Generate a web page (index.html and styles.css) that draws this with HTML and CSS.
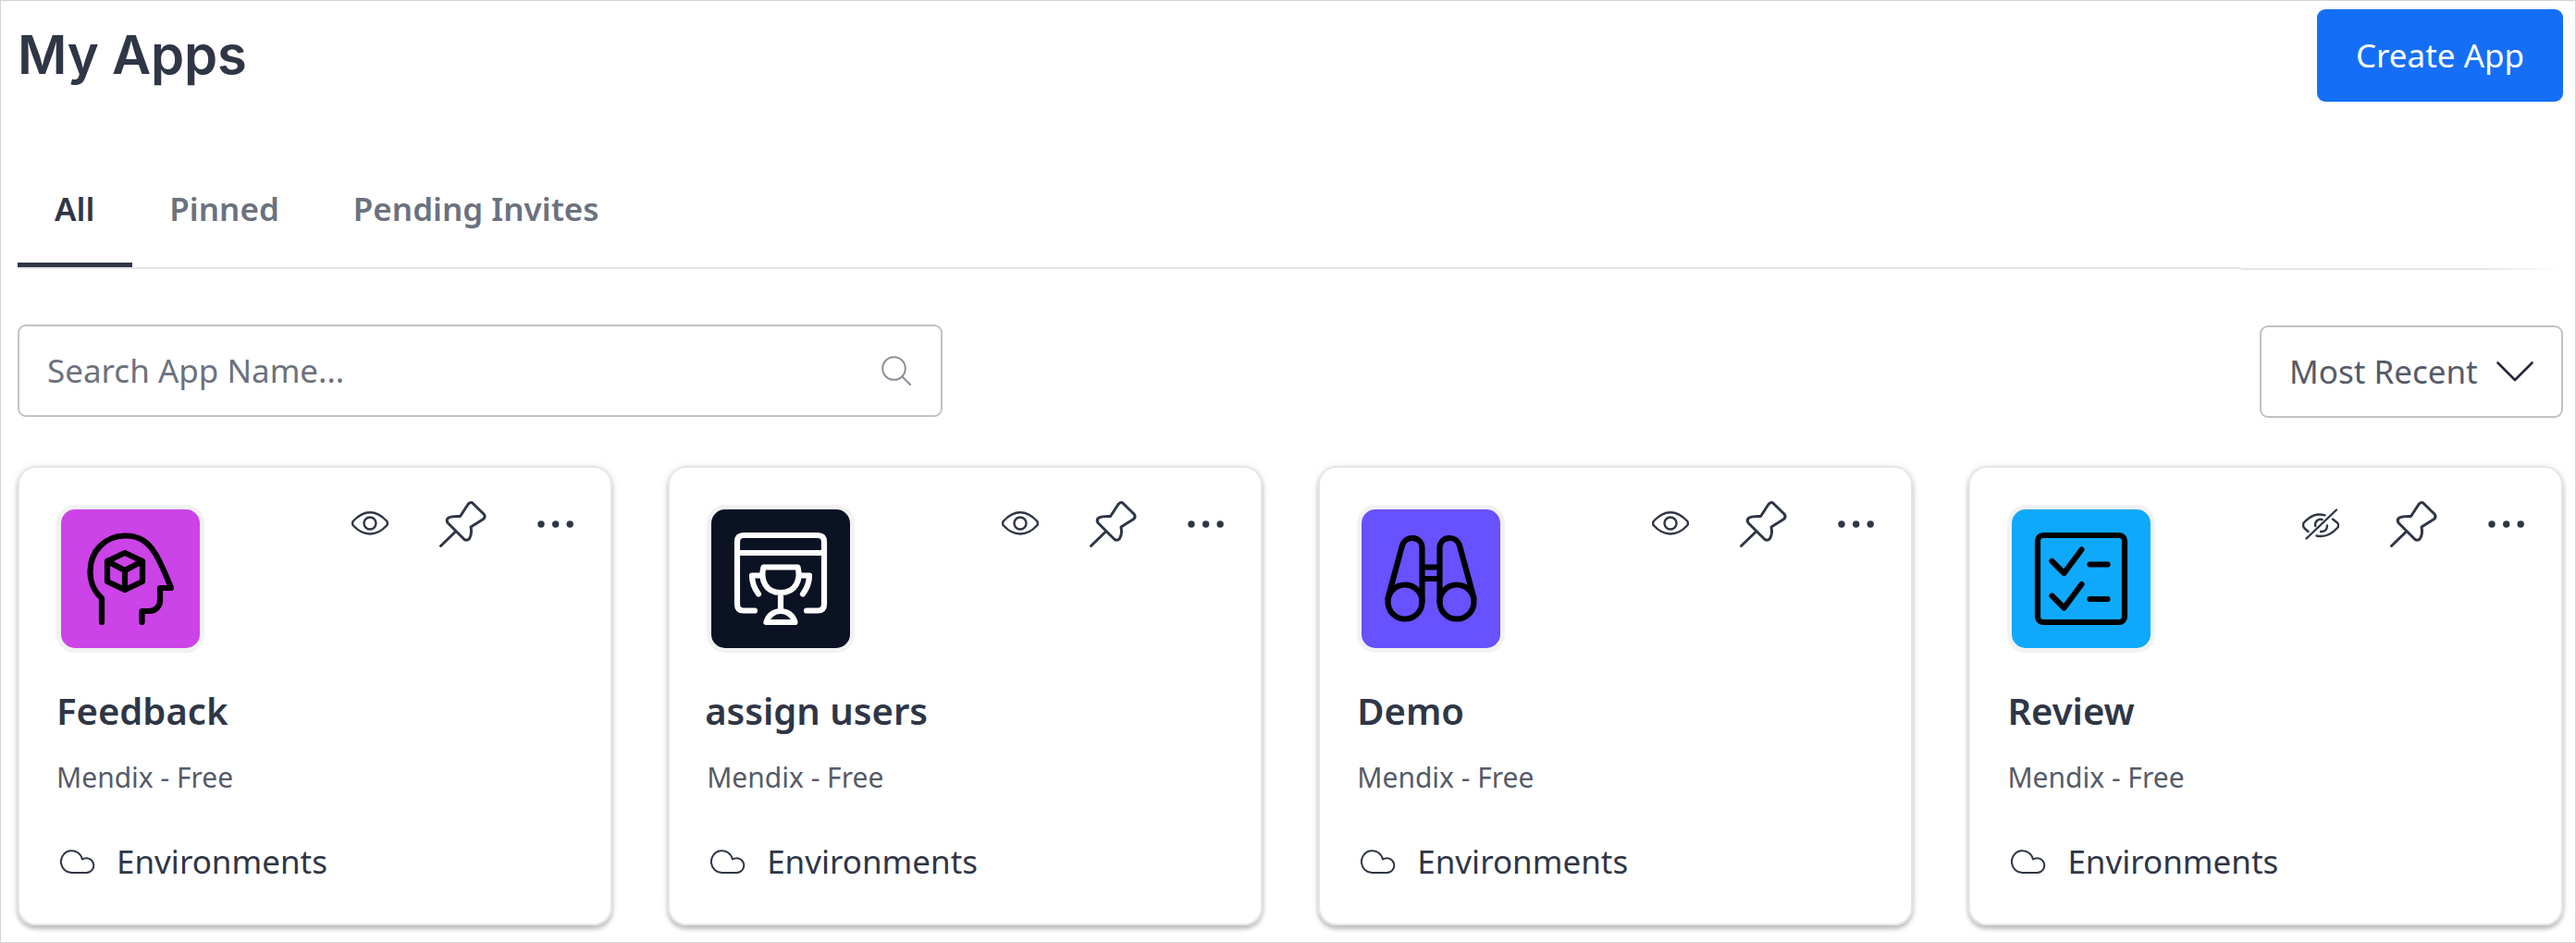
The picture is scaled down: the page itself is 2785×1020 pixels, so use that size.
FILE: index.html
```
<!DOCTYPE html>
<html lang="en">
<head>
<meta charset="utf-8">
<title>My Apps</title>
<link rel="stylesheet" href="styles.css">
</head>
<body>
<svg class="sprite" aria-hidden="true">
  <symbol id="eye" viewBox="0 0 40 26"><path d="M2 10.500C7.500 4.500 13 1.200 20 1.200S32.500 4.500 38 10.500Q40 13 38 15.500C32.500 21.500 27 24.500 20 24.500S7.500 21.500 2 15.500Q0 13 2 10.500Z"/><circle cx="20" cy="13" r="6.500"/></symbol>
  <symbol id="eye-off" viewBox="0 0 40 34"><path d="M24.500 7.300C15 5 9 8 2.500 14.500Q-.5 18 2.500 21.500L6.500 25M33 11.500L38 15.500Q40.500 18 38 21C31 28.500 24 31.500 15.500 29.500M4.500 32.500L37 1.500M14.200 19C13.500 14 17 11 21.500 12M27 18.500C27 23 24 25.500 20 25"/></symbol>
  <symbol id="pin" viewBox="0 0 52 52"><path d="M2.500 49.500L18.500 34M23.500 17.500L32 4.500Q34.500 1.200 37.500 3.700L49 15Q51.500 18 48.500 20.500L35 29C36 34 35 39 33.500 41.500Q31 44.500 28 42.500L10 24.500Q8 21 11 19C14 17.500 19 17.300 23.500 17.500Z"/></symbol>
  <symbol id="dots" viewBox="0 0 40 8"><circle cx="4" cy="4" r="3.700"/><circle cx="19.700" cy="4" r="3.700"/><circle cx="35.200" cy="4" r="3.700"/></symbol>
  <symbol id="cloud" viewBox="0 0 38 26"><path d="M12.800 25A11.700 11.900 0 1 1 24 10.500A7.900 7.900 0 1 1 28.500 25Z"/></symbol>
</svg>
<div class="page">
  <header class="head">
    <h1 class="title">My Apps</h1>
    <button class="create">Create App</button>
  </header>
  <nav class="tabs">
    <a class="tab active">All</a>
    <a class="tab">Pinned</a>
    <a class="tab">Pending Invites</a>
  </nav>
  <div class="rule"><span class="rule-main"></span><span class="rule-fade"></span></div>
  <div class="filters">
    <div class="search"><span>Search App Name...</span>
      <svg class="glass" viewBox="0 0 32 32"><circle cx="13.500" cy="13.500" r="12.300"/><path d="M22.500 22.500L31 31"/></svg>
    </div>
    <div class="select"><span>Most Recent</span>
      <svg class="chevron" viewBox="0 0 40 22"><path d="M1.500 1.500L20 20L38.500 1.500"/></svg>
    </div>
  </div>
  <main class="cards">
    <article class="card">
      <div class="top">
        <svg class="tile magenta" viewBox="0 0 150 150"><path d="M44 122V96C34 87 31.500 78 31.500 67C31.500 45 48 28.500 69 28.500C85 28.500 94 35 102 48C108 58 113 70 119 85H107V97A11.500 11.500 0 0 1 95.500 110H87.500V122M50 56L69 47L88 56V78L69 87L50 78ZL69 66L88 56M69 66V87"/></svg>
        <div class="actions"><svg class="eye"><use href="#eye"/></svg><svg class="pin"><use href="#pin"/></svg><svg class="dots"><use href="#dots"/></svg></div>
      </div>
      <h2 class="name">Feedback</h2>
      <p class="plan">Mendix - Free</p>
      <div class="env"><svg class="cloud"><use href="#cloud"/></svg>Environments</div>
    </article>
    <article class="card">
      <div class="top">
        <svg class="tile navy" viewBox="0 0 150 150"><path d="M47 109.500H35Q28 109.500 28 102.500V35Q28 28 35 28H115Q122 28 122 35V102.500Q122 109.500 115 109.500H103M28 47H122M56.500 62.500H93.500C97 75 92 90 75 90S53 75 56.500 62.500ZM54 71.500H44Q44 82 51 91.500M96 71.500H106Q106 82 99 91.500M75 90V110M59.500 122H90.500C86 106 64 106 59.500 122Z"/></svg>
        <div class="actions"><svg class="eye"><use href="#eye"/></svg><svg class="pin"><use href="#pin"/></svg><svg class="dots"><use href="#dots"/></svg></div>
      </div>
      <h2 class="name outdent">assign users</h2>
      <p class="plan">Mendix - Free</p>
      <div class="env"><svg class="cloud"><use href="#cloud"/></svg>Environments</div>
    </article>
    <article class="card">
      <div class="top">
        <svg class="tile violet" viewBox="0 0 150 150"><circle cx="47" cy="100" r="18.500"/><circle cx="103" cy="100" r="18.500"/><path d="M28.500 96L44 39C48 27 65.500 29 65.500 42V100M121.500 96L106 39C102 27 84.500 29 84.500 42V100M65.500 62.500H84.500M65.500 75H84.500"/></svg>
        <div class="actions"><svg class="eye"><use href="#eye"/></svg><svg class="pin"><use href="#pin"/></svg><svg class="dots"><use href="#dots"/></svg></div>
      </div>
      <h2 class="name">Demo</h2>
      <p class="plan">Mendix - Free</p>
      <div class="env"><svg class="cloud"><use href="#cloud"/></svg>Environments</div>
    </article>
    <article class="card">
      <div class="top">
        <svg class="tile blue" viewBox="0 0 150 150"><rect x="28" y="28" width="94" height="94" rx="6"/><path d="M43.500 56L56.500 69L75.500 43.500M43.500 93.500L56.500 106.500L75.500 81M84.500 59.500H103.500M84.500 97H103.500"/></svg>
        <div class="actions"><svg class="eye-off"><use href="#eye-off"/></svg><svg class="pin"><use href="#pin"/></svg><svg class="dots"><use href="#dots"/></svg></div>
      </div>
      <h2 class="name">Review</h2>
      <p class="plan">Mendix - Free</p>
      <div class="env"><svg class="cloud"><use href="#cloud"/></svg>Environments</div>
    </article>
  </main>
</div>
</body>
</html>
```
FILE: styles.css
```
* { box-sizing: border-box; }
body { margin: 0; background: #fff; font-family: "Noto Sans", sans-serif; color: #2f3646; }
svg { fill: none; stroke: currentColor; stroke-width: 2.4; stroke-linecap: round; stroke-linejoin: round; flex: none; }
.sprite { display: none; }
.page { height: 1020px; border: 1px solid #d3d3d3; padding: 9px 13px 0 18px; overflow: hidden; }
.head { display: flex; justify-content: space-between; align-items: flex-start; height: 160px; }
.title { margin: 0; font: 600 58px/99px "Inter", sans-serif; letter-spacing: -0.2px; }
.create { width: 266px; height: 100px; padding: 0; border: 0; border-radius: 9px; background: #146ff6; color: #fff; font: 400 35px/96px "Noto Sans", sans-serif; }
.tabs { display: flex; height: 119px; }
.tab { padding: 0 40px; font-size: 35px; font-weight: 600; line-height: 112px; color: #6c717e; }
.tab.active { padding-right: 41px; color: #2f3646; border-bottom: 5px solid #2f3646; }
.rule { display: flex; height: 2px; }
.rule-main { flex: 1; background: #e5e5e8; }
.rule-fade { width: 348px; height: 2px; margin-top: 1px; background: linear-gradient(90deg, #e5e5e8 75%, #fff); }
.filters { display: flex; justify-content: space-between; margin-top: 60px; }
.search, .select { display: flex; align-items: center; justify-content: space-between; height: 100px; border: 2px solid #c1c2c8; border-radius: 9px; font-size: 35px; }
.search span, .select span { padding-bottom: 2px; }
.search { width: 1000px; padding: 0 32px 0 30px; color: #6c717e; }
.select { width: 328px; margin-top: 1px; padding: 0 30px; color: #555b68; }
.glass { width: 32px; height: 32px; color: #8b8f99; stroke-width: 2; }
.chevron { width: 40px; height: 22px; color: #23283a; stroke-width: 2.6; }
.cards { display: grid; grid-template-columns: repeat(4, 1fr); column-gap: 60.5px; margin-top: 52px; }
.card { height: 497px; border: 2px solid #e5e5e5; border-radius: 20px; padding: 40px 39px 0 40px; box-shadow: 0 4px 5px rgba(0,0,0,.24), 0 0 8px rgba(0,0,0,.08); }
.top { display: flex; justify-content: space-between; }
.tile { width: 160px; height: 160px; border: 5px solid #f2f2f2; border-radius: 20px; color: #000; stroke-width: 6.2; }
.magenta { background: #cc43e8; }
.navy { background: #0a1224; color: #fff; }
.violet { background: #6851ff; }
.blue { background: #0fa9fb; }
.actions { display: flex; }
.eye { width: 40px; height: 26px; margin: 7px 54px 0 0; }
.eye-off { width: 40px; height: 34px; margin: 4px 54px 0 0; }
.pin { width: 52px; height: 52px; margin: -5px 55px 0 0; stroke-width: 3; }
.dots { width: 40px; height: 8px; margin-top: 16.5px; fill: currentColor; stroke: none; }
.name { margin: 33px 0 0; font-size: 40px; font-weight: 600; line-height: 60px; }
.outdent { margin-left: -2px; }
.plan { margin: 20px 0 0; font-size: 30px; line-height: 44px; color: #555b68; }
.env { display: flex; align-items: center; gap: 23px; margin: 43px 0 0 4px; font-size: 35px; line-height: 52px; }
.cloud { width: 38px; height: 26px; stroke-width: 2; }
```
